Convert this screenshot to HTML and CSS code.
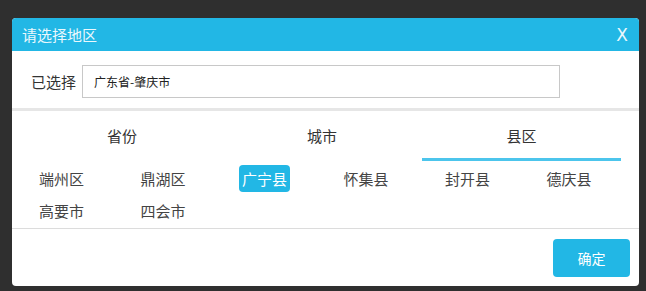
FILE: index.html
```html
<!DOCTYPE html>
<html>
<head>
  <meta charset="utf-8">
  <title>请选择地区</title>
  <link rel="stylesheet" href="styles.css">
</head>
<body>
  <div class="dialog">
    <div class="dialog-head">
      <span class="dialog-title">请选择地区</span>
      <span class="dialog-close">X</span>
    </div>

    <div class="picked">
      <label>已选择</label>
      <div class="picked-input">广东省-肇庆市</div>
    </div>

    <div class="tabs">
      <div class="tab">省份</div>
      <div class="tab">城市</div>
      <div class="tab active">县区</div>
    </div>

    <div class="area-list">
      <span class="area">端州区</span>
      <span class="area">鼎湖区</span>
      <span class="area selected">广宁县</span>
      <span class="area">怀集县</span>
      <span class="area">封开县</span>
      <span class="area">德庆县</span>
      <span class="area">高要市</span>
      <span class="area">四会市</span>
    </div>

    <div class="dialog-foot">
      <button class="btn-ok">确定</button>
    </div>
  </div>
</body>
</html>
```

FILE: styles.css
```css
* {
  margin: 0;
  padding: 0;
  box-sizing: border-box;
  font-family: "Noto Sans CJK SC", "Liberation Sans", sans-serif;
}

body {
  background: #2f2f2f;
  padding: 18px 0 0 12px;
}

.dialog {
  width: 627px;
  height: 268px;
  background: #fff;
  border-radius: 4px;
  overflow: hidden;
}

.dialog-head {
  height: 33px;
  background: #22b7e5;
  display: flex;
  justify-content: space-between;
  align-items: center;
  padding: 0 10px;
  color: #eaf8fd;
  font-size: 15px;
}

.dialog-close {
  font-family: "DejaVu Sans", sans-serif;
  font-size: 17px;
  margin-right: 1px;
}

.picked {
  display: flex;
  align-items: center;
  padding: 14px 0 10px 19px;
  border-bottom: 3px solid #e6e6e6;
}

.picked label {
  font-size: 15px;
  color: #333;
}

.picked-input {
  margin-left: 6px;
  width: 478px;
  height: 33px;
  line-height: 31px;
  border: 1px solid #c8c8c8;
  padding-left: 11px;
  font-size: 12px;
  color: #222;
}

.tabs {
  display: flex;
  padding: 0 18px 0 10px;
}

.tab {
  width: 200px;
  padding-top: 2px;
  line-height: 45px;
  text-align: center;
  font-size: 15px;
  color: #333;
  border-bottom: 3px solid transparent;
}

.tab.active {
  width: 199px;
  border-bottom-color: #4cc5ec;
}

.area-list {
  display: grid;
  grid-template-columns: repeat(6, 101.5px);
  row-gap: 5px;
  padding: 4px 0 4px 24px;
  border-bottom: 1px solid #dcdcdc;
  justify-items: start;
}

.area {
  padding: 3px;
  line-height: 21px;
  font-size: 15px;
  color: #444;
  border-radius: 4px;
}

.area.selected {
  background: #22b7e5;
  color: #fff;
}

.dialog-foot {
  display: flex;
  justify-content: flex-end;
  padding: 10px 9px 0 0;
}

.btn-ok {
  width: 77px;
  height: 38px;
  border: none;
  border-radius: 4px;
  background: #22b7e5;
  color: #fff;
  font-size: 14px;
}
```
